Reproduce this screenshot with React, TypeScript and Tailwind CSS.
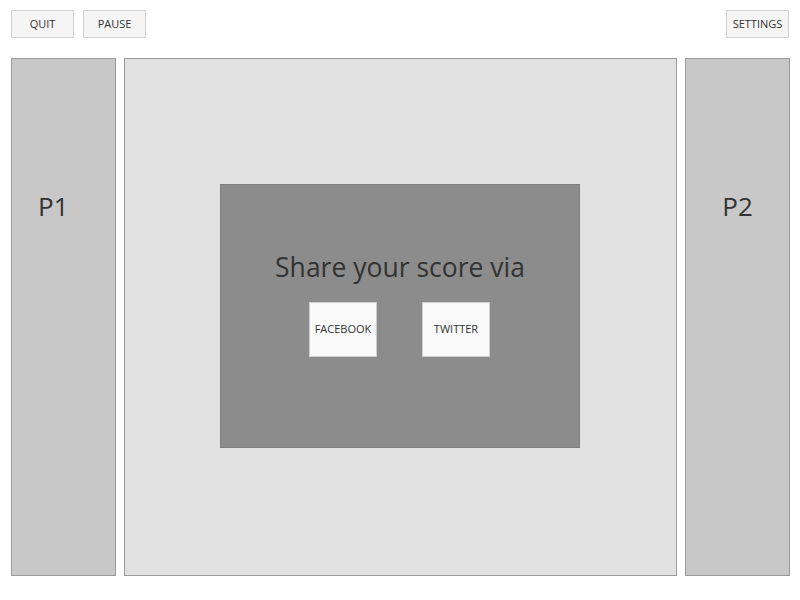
import React from "react";

const font = { fontFamily: '"Open Sans", "Noto Sans", sans-serif' };

function TopButton({ label, className = "" }: { label: string; className?: string }) {
  return (
    <button
      className={`flex h-[28px] w-[63px] items-center justify-center border border-[#d2d2d2] bg-[#f5f5f5] text-[11px] text-[#333] ${className}`}
    >
      {label}
    </button>
  );
}

function PlayerPanel({ name, left }: { name: string; left?: boolean }) {
  return (
    <div
      className={
        left
          ? "flex w-[105px] flex-col items-start border border-[#9a9a9a] bg-[#c8c8c8] pl-[26px] pt-[134px]"
          : "flex w-[105px] flex-col items-center border border-[#9a9a9a] bg-[#c8c8c8] pt-[134px]"
      }
    >
      <span className="text-[26px] leading-none text-[#333]">{name}</span>
    </div>
  );
}

function ShareButton({ label }: { label: string }) {
  return (
    <button className="flex h-[55px] w-[68px] items-center justify-center border border-[#cfcfcf] bg-[#f9f9f9] text-[11px] text-[#333]">
      {label}
    </button>
  );
}

export default function App() {
  return (
    <div style={font} className="h-[600px] w-[800px] bg-white pl-[11px] pr-[10px] pt-[10px]">
      <div className="flex items-center justify-between">
        <div className="flex gap-[9px]">
          <TopButton label="QUIT" />
          <TopButton label="PAUSE" />
        </div>
        <TopButton label="SETTINGS" className="mr-[1px]" />
      </div>

      <div className="mt-[20px] flex h-[518px] gap-[8px]">
        <PlayerPanel name="P1" left />
        <div className="flex flex-1 border border-[#9a9a9a] bg-[#e1e1e1] pl-[95px] pt-[125px]">
          <div className="flex h-[264px] w-[360px] flex-col items-center border border-[#7f7f7f] bg-[#8c8c8c] pt-[69px]">
            <h2 className="text-[26.5px] leading-none text-[#333]">Share your score via</h2>
            <div className="mt-[21px] flex gap-[45px] pr-[1px]">
              <ShareButton label="FACEBOOK" />
              <ShareButton label="TWITTER" />
            </div>
          </div>
        </div>
        <PlayerPanel name="P2" />
      </div>
    </div>
  );
}
